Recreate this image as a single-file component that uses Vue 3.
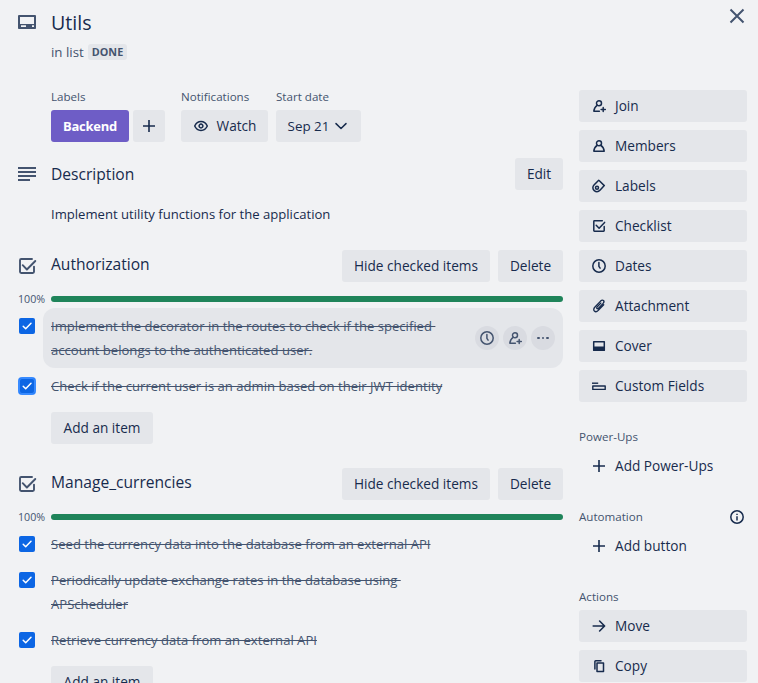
<script setup>
import { h } from 'vue'

const shapes = {
  card: { box: 24, d: ['M4 6h16v12H4z'], w: 2, fill: 'M3.5 14h17v4.6h-17z', hole: 'M6 15.2h5v1.8H6zM17 15.2h2v1.8h-2z' },
  lines: { box: 24, d: ['M3 6h18M3 10h18M3 14h18M3 18h12'], w: 2, butt: true },
  checklist: { box: 24, d: ['M17 5H6.2Q5 5 5 6.2v11.6Q5 19 6.2 19h11.6q1.2 0 1.2-1.2V12.6', 'M7.7 11.2l4.2 4.3L20.3 7'], w: 1.9 },
  check: { box: 16, d: ['M11.3 2.8H3.4q-.6 0-.6.6v9.2q0 .6.6.6h9.2q.6 0 .6-.6V8.6', 'M5.2 7.2l2.9 3L13.6 4.4'], w: 1.5 },
  close: { box: 16, d: ['M1.5 1.5l13 13M14.5 1.5l-13 13'], w: 2, butt: true },
  plus: { box: 16, d: ['M8 2v12M2 8h12'], w: 1.6, butt: true },
  eye: { box: 16, d: ['M1.7 8C3 5.2 5.3 3.6 8 3.6s5 1.6 6.3 4.4C13 10.8 10.7 12.4 8 12.4S3 10.8 1.7 8z', 'M8 6.1a1.9 1.9 0 1 0 0 3.8a1.9 1.9 0 1 0 0-3.8z'], w: 1.5 },
  chevron: { box: 16, d: ['M3 5.6L8 10.5l5-4.9'], w: 1.5 },
  join: { box: 16, d: ['M8 2.7a2.5 2.5 0 1 0 0 5a2.5 2.5 0 1 0 0-5z', 'M6.1 7.3C4.4 8.4 3.1 10.3 2.8 13.2H8.4', 'M12.2 9.4v4.2M10.1 11.5h4.2'], w: 1.5 },
  person: { box: 16, d: ['M8 2.7a2.5 2.5 0 1 0 0 5a2.5 2.5 0 1 0 0-5z', 'M6.1 7.5C4.3 8.4 3.1 10.3 2.8 13.2h10.4C12.9 10.3 11.7 8.4 9.9 7.5'], w: 1.5 },
  tag: { box: 16, d: ['M8.1 2.5L13.3 7.6L9.2 12.1C7.4 14 5 14.1 3.3 12.6C1.5 11 1.4 8.7 3 7L7.2 2.7q.5-.5.9-.2z', 'M6 8.2a1.5 1.5 0 1 0 0 3a1.5 1.5 0 1 0 0-3z'], w: 1.5 },
  clock: { box: 16, d: ['M8 1.8a6.2 6.2 0 1 0 0 12.4a6.2 6.2 0 1 0 0-12.4z', 'M7.9 4.5v3.8l1.2 1.9'], w: 1.5 },
  clip: { box: 16, d: ['M9.8 5.1L6 9.1c-.9 1 .3 2.3 1.3 1.3l4.8-5C14.2 3.1 11.8.9 9.6 3.1L4 9C.8 12.3 4.4 15.4 7.3 12.4L12.7 6.8'], w: 1.35 },
  cover: { box: 16, d: ['M2.7 3.8h10.6v8.5H2.7z'], w: 1.5, fill: 'M2.2 8.5h11.6v4.3H2.2z' },
  fields: { box: 16, d: ['M1 5.2h6.2', 'M1.8 8h12.4v3.4H1.8z'], w: 1.4, butt: true },
  arrow: { box: 16, d: ['M2.2 8h11.3M8.6 3l5 5-5 5'], w: 1.6 },
  copy: { box: 16, d: ['M6 4.9h6.5v8.5H6z', 'M3.9 11V3.5q0-.7.7-.7H10'], w: 1.5 },
  info: { box: 16, d: ['M8 1.8a6.2 6.2 0 1 0 0 12.4a6.2 6.2 0 1 0 0-12.4z', 'M8 7.2v4.2M8 4.7v1.4'], w: 1.5, butt: true },
  tick: { box: 16, d: ['M4.2 8.2l2.5 2.5L12 5.2'], w: 1.5 }
}

const Icon = (props) => {
  const s = shapes[props.name]
  const cap = s.butt ? 'butt' : 'round'
  return h('svg', { viewBox: `0 0 ${s.box} ${s.box}`, width: s.box, height: s.box, fill: 'none', 'aria-hidden': 'true' }, [
    ...s.d.map((d) => h('path', { d, stroke: 'currentColor', 'stroke-width': s.w, 'stroke-linecap': cap, 'stroke-linejoin': 'round' })),
    s.fill && h('path', { d: s.fill, fill: 'currentColor' }),
    s.hole && h('path', { d: s.hole, fill: '#f1f2f4' })
  ])
}
Icon.props = ['name']

const checklists = [
  {
    title: 'Authorization',
    items: [
      { text: 'Implement the decorator in the routes to check if the specified \naccount belongs to the authenticated user.', active: true },
      { text: 'Check if the current user is an admin based on their JWT identity', focused: true }
    ]
  },
  {
    title: 'Manage_currencies',
    items: [
      { text: 'Seed the currency data into the database from an external API' },
      { text: 'Periodically update exchange rates in the database using \nAPScheduler' },
      { text: 'Retrieve currency data from an external API' }
    ]
  }
]

const actions = [
  ['join', 'Join'], ['person', 'Members'], ['tag', 'Labels'], ['check', 'Checklist'],
  ['clock', 'Dates'], ['clip', 'Attachment'], ['cover', 'Cover'], ['fields', 'Custom Fields']
]
</script>

<template>
  <div class="dialog">
    <main>
      <header class="row head">
        <Icon name="card" />
        <div>
          <h1>Utils</h1>
          <p class="in-list">in list <span class="list">DONE</span></p>
        </div>
      </header>

      <div class="meta">
        <div>
          <h3>Labels</h3>
          <div class="group">
            <span class="btn label">Backend</span>
            <button class="btn square"><Icon name="plus" /></button>
          </div>
        </div>
        <div>
          <h3>Notifications</h3>
          <button class="btn watch"><Icon name="eye" />Watch</button>
        </div>
        <div>
          <h3>Start date</h3>
          <button class="btn date">Sep 21<Icon name="chevron" /></button>
        </div>
      </div>

      <section class="description">
        <div class="row bar">
          <Icon name="lines" />
          <h2>Description</h2>
          <button class="btn edit">Edit</button>
        </div>
        <p class="text">Implement utility functions for the application</p>
      </section>

      <section v-for="list in checklists" :key="list.title" class="checklist">
        <div class="row bar">
          <Icon name="checklist" />
          <h2 class="raised">{{ list.title }}</h2>
          <button class="btn hide">Hide checked items</button>
          <button class="btn delete">Delete</button>
        </div>
        <div class="progress"><span>100%</span><div class="track"></div></div>
        <div v-for="item in list.items" :key="item.text" class="item">
          <span class="box" :class="{ focused: item.focused }"><Icon name="tick" /></span>
          <div class="body" :class="{ active: item.active }">
            <s>{{ item.text }}</s>
            <div v-if="item.active" class="tools">
              <span><Icon name="clock" /></span>
              <span><Icon name="join" /></span>
              <span class="dots"><i></i><i></i><i></i></span>
            </div>
          </div>
        </div>
        <button class="btn add">Add an item</button>
      </section>
    </main>

    <aside>
      <div class="close"><Icon name="close" /></div>
      <div class="stack">
        <button v-for="[icon, name] in actions" :key="name" class="btn side"><Icon :name="icon" />{{ name }}</button>
      </div>
      <h3>Power-Ups</h3>
      <button class="btn side plain"><Icon name="plus" />Add Power-Ups</button>
      <h3 class="split">Automation<Icon name="info" /></h3>
      <button class="btn side plain"><Icon name="plus" />Add button</button>
      <h3>Actions</h3>
      <div class="stack">
        <button class="btn side"><Icon name="arrow" />Move</button>
        <button class="btn side"><Icon name="copy" />Copy</button>
      </div>
    </aside>
  </div>
</template>

<style>
body { margin: 0; background: #f1f2f4; overflow: hidden; }
</style>

<style scoped>
.dialog {
  display: flex;
  gap: 16px;
  height: 683px;
  overflow: hidden;
  padding-left: 15px;
  box-sizing: border-box;
  background: #f1f2f4;
  color: #172b4d;
  font: 400 13.1px/20px "Open Sans", "Noto Sans", sans-serif;
}
main { width: 548px; flex: none; }
h1, h2, h3, p { margin: 0; }
svg { display: block; flex: none; }
.row { display: flex; gap: 12px; color: #44546f; }
.head { height: 79px; padding-top: 10px; box-sizing: border-box; }
h1 { font-size: 19.6px; font-weight: 500; line-height: 26px; color: #172b4d; }
.in-list { margin-top: 6px; display: flex; align-items: center; gap: 4px; line-height: 20px; font-size: 13.3px; }
.list { height: 16px; padding: 0 4px; border-radius: 3px; background: #e4e6ea; font-size: 10.8px; line-height: 16px; font-weight: 700; }
.meta { display: flex; padding: 8px 0 0 36px; }
h3 { color: #44546f; font-size: 11.6px; font-weight: 500; line-height: 20px; }
.meta h3 { margin-bottom: 3px; }
.group { display: flex; gap: 4px; margin-right: 16px; }
.btn {
  display: flex;
  align-items: center;
  justify-content: center;
  height: 32px;
  padding: 0;
  border: 0;
  border-radius: 3px;
  background: #e4e6ea;
  color: #172b4d;
  font: 500 13.65px/20px "Open Sans", "Noto Sans", sans-serif;
  white-space: nowrap;
}
.label { width: 78px; background: #6e5dc6; color: #fff; font-size: 13px; font-weight: 700; letter-spacing: -0.25px; }
.square { width: 32px; }
.watch { width: 87px; gap: 8px; margin-right: 8px; }
.date { width: 85px; gap: 4px; font-size: 13.4px; }
.bar { align-items: center; height: 32px; }
h2 { flex: 1; font-size: 15.6px; font-weight: 500; line-height: 20px; color: #172b4d; }
.raised { margin-top: -4px; }
.description { margin-top: 16px; height: 92px; }
.text { margin: 14px 0 0 36px; }
.edit { width: 48px; }
.hide { width: 148px; }
.delete { width: 65px; margin-left: -4px; }
.checklist { height: 218px; }
.progress { display: flex; align-items: center; height: 14px; margin: 10px 0 2px; color: #44546f; font-size: 10.7px; }
.progress span { width: 36px; padding-left: 3px; box-sizing: border-box; }
.track { flex: 1; height: 6px; border-radius: 3px; background: #1f845a; }
.item { display: flex; align-items: flex-start; gap: 8px; }
.box { width: 16px; height: 16px; margin: 10px 0 0 4px; border-radius: 2px; background: #0c66e4; color: #fff; }
.focused { border-radius: 3px; box-shadow: 0 0 0 1px #388bff, inset 0 0 0 1px #388bff; }
.body { flex: 1; display: flex; justify-content: space-between; align-items: center; padding: 6px 8px; border-radius: 12px; color: #44546f; line-height: 24px; }
.body s { white-space: pre; }
.active { background: #e4e6ea; }
.tools { display: flex; gap: 4px; }
.tools span { display: grid; place-items: center; width: 24px; height: 24px; border-radius: 50%; background: #d9dbe1; }
.tools .dots { display: flex; align-items: center; justify-content: center; gap: 2px; }
.dots i { width: 2.8px; height: 2.8px; border-radius: 50%; background: #44546f; }
.add { width: 102px; margin: 8px 0 0 36px; }
aside { width: 168px; flex: none; }
.close { display: flex; justify-content: flex-end; height: 90px; padding: 8px 2px 0 0; box-sizing: border-box; color: #44546f; }
.stack { display: grid; gap: 8px; }
.side { width: 168px; justify-content: flex-start; padding-left: 12px; gap: 8px; }
aside h3 { margin-top: 25px; margin-bottom: 3px; }
.plain { background: transparent; }
.plain + h3 { margin-top: 25px; }
.split { display: flex; justify-content: space-between; align-items: center; padding-right: 2px; }
.split svg { color: #172b4d; margin-top: -1px; }
</style>
